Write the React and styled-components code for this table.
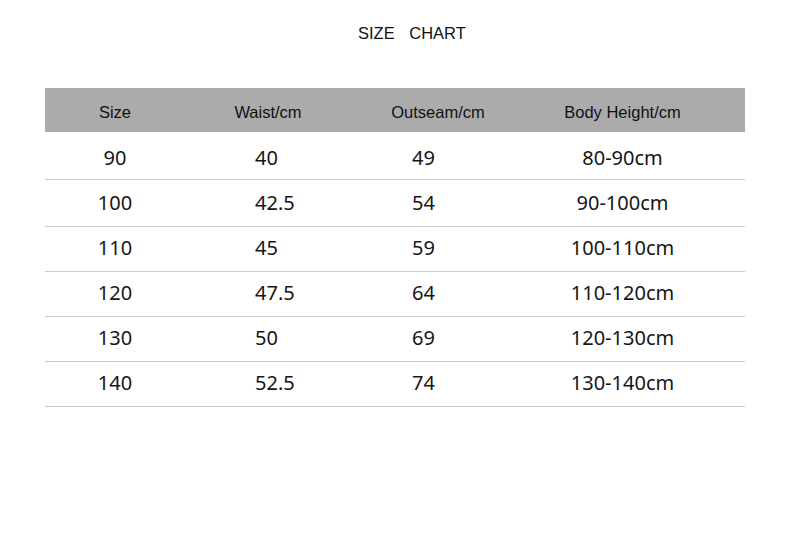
import React from "react";
import styled, { createGlobalStyle } from "styled-components";

const Global = createGlobalStyle`
  html, body {
    margin: 0;
    padding: 0;
    background: #ffffff;
  }
`;

const Page = styled.div`
  width: 790px;
  height: 546px;
  background: #ffffff;
  box-sizing: border-box;
  padding: 26px 45px 0 45px;
`;

const Title = styled.h1`
  margin: 0 0 48px 0;
  padding-left: 313px;
  height: 14px;
  line-height: 14px;
  font-family: "Liberation Sans", Arial, sans-serif;
  font-weight: normal;
  font-size: 16.5px;
  color: #111;
  word-spacing: 10px;
  white-space: pre;
`;

const COLS = "140px 166px 174px 195px 1fr";

const HeadRow = styled.div`
  display: grid;
  grid-template-columns: ${COLS};
  height: 44px;
  align-items: center;
  background: #ababab;
`;

const HeadCell = styled.div`
  text-align: center;
  font-family: "Liberation Sans", Arial, sans-serif;
  font-size: 16.5px;
  color: #111;
  padding-top: 5px;
`;

const Row = styled.div`
  display: grid;
  grid-template-columns: ${COLS};
  height: ${(p) => p.$h}px;
  align-items: center;
  border-bottom: 1px solid #cccccc;
`;

const Cell = styled.div`
  font-family: "Noto Sans", sans-serif;
  font-size: 20px;
  color: #161616;
  text-align: ${(p) => (p.$pad ? "left" : "center")};
  padding-left: ${(p) => p.$pad || 0}px;
  margin-top: ${(p) => p.$shift}px;
`;

const heads = ["Size", "Waist/cm", "Outseam/cm", "Body Height/cm"];

const rows = [
  ["90", "40", "49", "80-90cm"],
  ["100", "42.5", "54", "90-100cm"],
  ["110", "45", "59", "100-110cm"],
  ["120", "47.5", "64", "110-120cm"],
  ["130", "50", "69", "120-130cm"],
  ["140", "52.5", "74", "130-140cm"],
];

const heights = [47, 46, 44, 44, 44, 44];
const shifts = [3, -1, -3, -3, -3, -3];
const pads = [0, 70, 61, 0];

export default function App() {
  return (
    <Page>
      <Global />
      <Title>SIZE CHART</Title>
      <HeadRow>
        {heads.map((h) => (
          <HeadCell key={h}>{h}</HeadCell>
        ))}
      </HeadRow>
      {rows.map((r, i) => (
        <Row key={r[0]} $h={heights[i]}>
          {r.map((v, j) => (
            <Cell key={j} $pad={pads[j]} $shift={shifts[i]}>
              {v}
            </Cell>
          ))}
        </Row>
      ))}
    </Page>
  );
}
